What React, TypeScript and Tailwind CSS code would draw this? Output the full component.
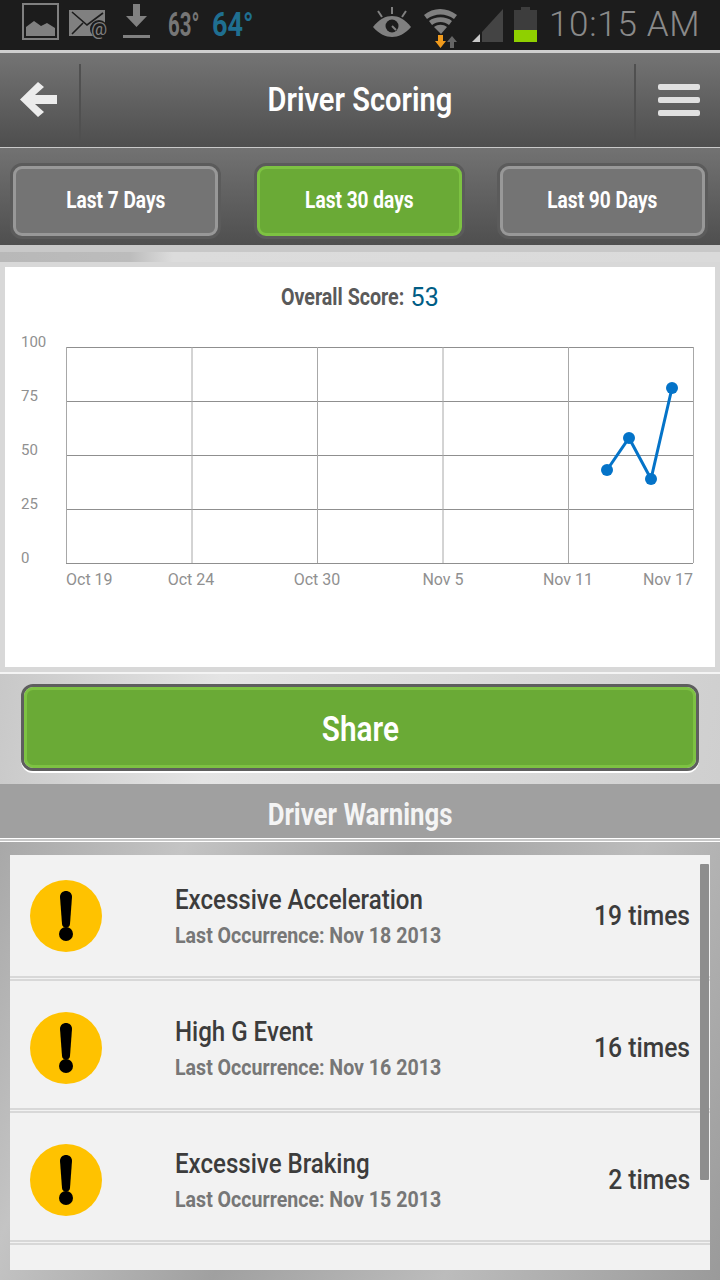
const roboto = '[font-family:Roboto,sans-serif]'

const tabs = [
  { label: 'Last 7 Days', active: false },
  { label: 'Last 30 days', active: true },
  { label: 'Last 90 Days', active: false },
]

const warnings = [
  { title: 'Excessive Acceleration', date: 'Nov 18 2013', count: '19 times' },
  { title: 'High G Event', date: 'Nov 16 2013', count: '16 times' },
  { title: 'Excessive Braking', date: 'Nov 15 2013', count: '2 times' },
]

function StatusBar() {
  return (
    <div className="h-[50px] bg-[#1c1c1c] flex items-center pl-[22px] pr-[22px] relative">
      <svg width="238" height="44" viewBox="0 0 238 44" className="shrink-0">
        <rect x="1" y="1" width="35" height="35" fill="none" stroke="#808080" strokeWidth="2" />
        <path d="M4 33v-9l8-6 7 5 6-3 8 5v8z" fill="#808080" />
        <rect x="47" y="7" width="36" height="26" fill="#808080" />
        <path d="M50 9l15 13 16-12M50 31l11-11" stroke="#1c1c1c" strokeWidth="1.6" fill="none" />
        <circle cx="77" cy="26" r="9" fill="#1c1c1c" />
        <text x="77" y="32" fontSize="18" textAnchor="middle" fill="#808080" fontFamily="Roboto, sans-serif">@</text>
        <path d="M111 1h7v12h7l-10.500 11-10.500-11h7z" fill="#808080" />
        <rect x="101" y="32" width="27" height="3" fill="#808080" />
      </svg>
      <span className="absolute left-[168px] top-[7px] text-[33px] leading-[36px] font-bold text-[#767676] [font-family:Roboto,sans-serif] scale-x-[0.62] origin-left">
        63°
      </span>
      <span className="absolute left-[212px] top-[7px] text-[33px] leading-[36px] font-bold text-[#1f6f91] [font-family:Roboto,sans-serif] scale-x-[0.82] origin-left">
        64°
      </span>
      <svg width="170" height="44" viewBox="0 0 170 44" className="absolute left-[372px] top-[6px]">
        <path d="M1 21c6-8 13-11 19-11s13 3 19 11c-6 7-13 10-19 10S7 28 1 21z" fill="#808080" />
        <circle cx="20" cy="20" r="6.500" fill="#1c1c1c" />
        <path d="M20 20l4 4" stroke="#808080" strokeWidth="2" />
        <path d="M20 1v7M6 5l4 6M34 5l-4 6" stroke="#808080" strokeWidth="2" />
        <path d="M52 9c9-8 23-8 33 0l-3 4c-8-6-19-6-27 0z" fill="#808080" />
        <path d="M57 15c6-5 17-5 23 0l-3 4c-5-4-12-4-17 0z" fill="#808080" />
        <path d="M62 21c4-3 9-3 13 0l-6 7z" fill="#808080" />
        <path d="M66 29h5v6h3l-5.500 7-5.500-7h3z" fill="#f09a1c" />
        <path d="M80 30l5 6h-3v6h-4v-6h-3z" fill="#666" />
        <path d="M100 36l8-8v8z" fill="#c8c8c8" />
        <path d="M110 36V26l21-23v33z" fill="#444" />
      </svg>
      <div className="absolute left-[514px] top-[7px] w-[23px] h-[35px] flex flex-col">
        <div className="mx-auto w-[9px] h-[3px] bg-[#3d3d3d]" />
        <div className="h-[20px] bg-[#3d3d3d]" />
        <div className="h-[12px] bg-[#8fd000]" />
      </div>
      <span className={`absolute left-[549px] top-[4px] text-[35px] leading-[42px] font-light text-[#8a8a8a] tracking-[0.7px] ${roboto}`}>
        10:15 AM
      </span>
    </div>
  )
}

function Header() {
  return (
    <div className="h-[94px] flex items-center bg-[linear-gradient(180deg,#747474_0%,#4e4e4e_100%)]">
      <div className="w-[79px] flex items-center justify-center pr-[4px] -mt-[2px]">
        <svg width="38" height="36" viewBox="0 0 38 36">
          <path d="M19 1l6 5-9 8h22v9H16l9 8-6 5L1 18.500z" fill="#ececec" strokeLinejoin="round" />
        </svg>
      </div>
      <div className="w-[2px] h-[78px] self-end mb-[5px] bg-[#505050]" />
      <div className="flex-1 text-center pl-[5px]">
        <span className={`inline-block text-[33px] leading-[40px] font-semibold text-white scale-x-[0.88] ${roboto}`}>
          Driver Scoring
        </span>
      </div>
      <div className="w-[2px] h-[78px] self-end mb-[5px] bg-[#505050]" />
      <div className="w-[84px] flex items-center justify-center pl-[2px]">
        <div className="flex flex-col gap-[7px]">
          <div className="w-[42px] h-[6px] rounded-[2px] bg-[#e0e0e0]" />
          <div className="w-[42px] h-[6px] rounded-[2px] bg-[#e0e0e0]" />
          <div className="w-[42px] h-[6px] rounded-[2px] bg-[#e0e0e0]" />
        </div>
      </div>
    </div>
  )
}

function Tabs() {
  return (
    <div className="h-[97px] mt-px flex items-start justify-between pl-[10px] pr-[12px] pt-[15px] bg-[linear-gradient(180deg,#727272_0%,#4f4f4f_100%)]">
      {tabs.map((tab) => (
        <div key={tab.label} className="w-[211px] h-[76px] rounded-[12px] border-[3px] border-[#5b5b5b] flex">
          <div
            className={`flex-1 rounded-[9px] border-[3px] flex items-center justify-center ${
              tab.active ? 'bg-[#6aaa36] border-[#7dc242]' : 'bg-[#747474] border-[#989898]'
            }`}
          >
            <span className={`inline-block text-[23px] font-bold text-white scale-x-[0.83] ${roboto}`}>{tab.label}</span>
          </div>
        </div>
      ))}
    </div>
  )
}

function Chart() {
  const xs = [66, 191.500, 317, 442.500, 568, 693]
  const ys = [347, 401, 455, 509, 563]
  const yLabels = ['100', '75', '50', '25', '0']
  const points = '607,470 629,438 651,479 672,388'
  const labelFont = 'Roboto, sans-serif'
  return (
    <svg width="710" height="300" viewBox="0 0 710 300" className="block">
      {ys.map((y, i) => (
        <g key={y}>
          <line x1="61" x2="688" y1={y - 332 + 0.5} y2={y - 332 + 0.5} stroke="#8f8f8f" />
          <text x="16" y={y - 332} fontSize="15" fill="#909090" fontFamily={labelFont}>
            {yLabels[i]}
          </text>
        </g>
      ))}
      {xs.map((x) => (
        <line key={x} x1={x - 5 + 0.5} x2={x - 5 + 0.5} y1="15" y2="231" stroke="#a8a8a8" />
      ))}
      <text x="61" y="253" fontSize="16" fill="#909090" fontFamily={labelFont}>Oct 19</text>
      <text x="186" y="253" fontSize="16" textAnchor="middle" fill="#909090" fontFamily={labelFont}>Oct 24</text>
      <text x="312" y="253" fontSize="16" textAnchor="middle" fill="#909090" fontFamily={labelFont}>Oct 30</text>
      <text x="438" y="253" fontSize="16" textAnchor="middle" fill="#909090" fontFamily={labelFont}>Nov 5</text>
      <text x="563" y="253" fontSize="16" textAnchor="middle" fill="#909090" fontFamily={labelFont}>Nov 11</text>
      <text x="688" y="253" fontSize="16" textAnchor="end" fill="#909090" fontFamily={labelFont}>Nov 17</text>
      <g transform="translate(-5,-332)">
        <polyline points={points} fill="none" stroke="#0473c8" strokeWidth="3" />
        {points.split(' ').map((p) => {
          const [cx, cy] = p.split(',')
          return <circle key={p} cx={cx} cy={cy} r="6" fill="#0473c8" />
        })}
      </g>
    </svg>
  )
}

function WarningIcon() {
  return (
    <svg width="72" height="72" viewBox="0 0 72 72" className="shrink-0">
      <circle cx="36" cy="36" r="36" fill="#ffc200" />
      <path d="M30 17c0-8 12-8 12 0l-2 27c-.4 5-7.600 5-8 0z" fill="#000" />
      <circle cx="36" cy="54" r="7" fill="#000" />
    </svg>
  )
}

function WarningRow({ title, date, count }: { title: string; date: string; count: string }) {
  return (
    <div className="h-[132px] flex flex-col">
      <div className="h-[121px] shrink-0 flex items-center pl-[20px] pr-[20px]">
        <WarningIcon />
        <div className="ml-[73px] flex-1">
          <div className={`text-[28px] leading-[34px] font-medium text-[#3c3c3c] scale-x-[0.86] origin-left ${roboto}`}>{title}</div>
          <div className={`text-[22px] leading-[26px] mt-[6px] font-bold text-[#777] scale-x-[0.89] origin-left whitespace-nowrap ${roboto}`}>
            Last Occurrence: {date}
          </div>
        </div>
        <div className={`mt-[1px] text-[28px] leading-[34px] font-medium text-[#3c3c3c] scale-x-[0.88] origin-right ${roboto}`}>{count}</div>
      </div>
      <div className="h-[5px] shrink-0 border-y-2 border-[#d8d8d8]" />
    </div>
  )
}

export default function App() {
  return (
    <div className="w-[720px] h-[1280px] overflow-hidden flex flex-col bg-[#c9c9c9]">
      <StatusBar />
      <div className="h-[3px] bg-[#cfcfcf]" />
      <Header />
      <Tabs />
      <div className="h-[7px] bg-[#c8c8c8]" />
      <div className="h-[10px] bg-[linear-gradient(90deg,#b8b8b8_0%,#bcbcbc_18%,#dcdcdc_24%,#dadada_100%)]" />

      <div className="h-[412px] bg-[#d8d8d8] px-[5px] pt-[5px] pb-[5px] border-b-2 border-[#f4f4f4]">
        <div className="h-full bg-white">
          <div className="h-[65px] flex items-center justify-center gap-[6px] pb-[3px] pl-[6px]">
            <span className={`inline-block -ml-[27px] text-[23px] font-bold text-[#5a5a5a] scale-x-[0.855] origin-right whitespace-nowrap ${roboto}`}>Overall Score:</span>
            <span className={`text-[25px] text-[#005d85] ${roboto}`}>53</span>
          </div>
          <Chart />
        </div>
      </div>

      <div className="h-[110px] px-[21px] pt-[10px] bg-[linear-gradient(100deg,#c8c8c8_0%,#e4e4e4_30%,#dcdcdc_60%,#cfcfcf_100%)]">
        <div className="h-[87px] rounded-[12px] border-[3px] border-[#5e5e5e] shadow-[0_2px_0_#ffffff]">
          <div className="h-full rounded-[9px] border-[3px] border-[#7dc242] bg-[#6aaa36] flex items-center justify-center pt-[5px]">
            <span className={`inline-block text-[35px] font-semibold text-white scale-x-[0.85] ${roboto}`}>Share</span>
          </div>
        </div>
      </div>

      <div className="h-[54px] bg-[#a0a0a0] flex items-center justify-center pt-[8px]">
        <span className={`inline-block text-[31px] font-bold text-[#f4f4f4] scale-x-[0.832] whitespace-nowrap ${roboto}`}>Driver Warnings</span>
      </div>
      <div className="h-[4px] border-y border-white bg-[#c8c8c8]" />

      <div className="flex-1 px-[10px] pt-[13px] bg-[linear-gradient(115deg,#a8a8a8_0%,#c4c4c4_20%,#a0a0a0_45%,#bcbcbc_70%,#9a9a9a_100%)]">
        <div className="relative h-[415px] bg-[#f2f2f2] overflow-hidden">
          {warnings.map((w) => (
            <WarningRow key={w.title} {...w} />
          ))}
          <div className="absolute right-px top-[9px] w-[9px] h-[316px] rounded-[1px] bg-[#8e8e8e]" />
        </div>
      </div>
    </div>
  )
}
